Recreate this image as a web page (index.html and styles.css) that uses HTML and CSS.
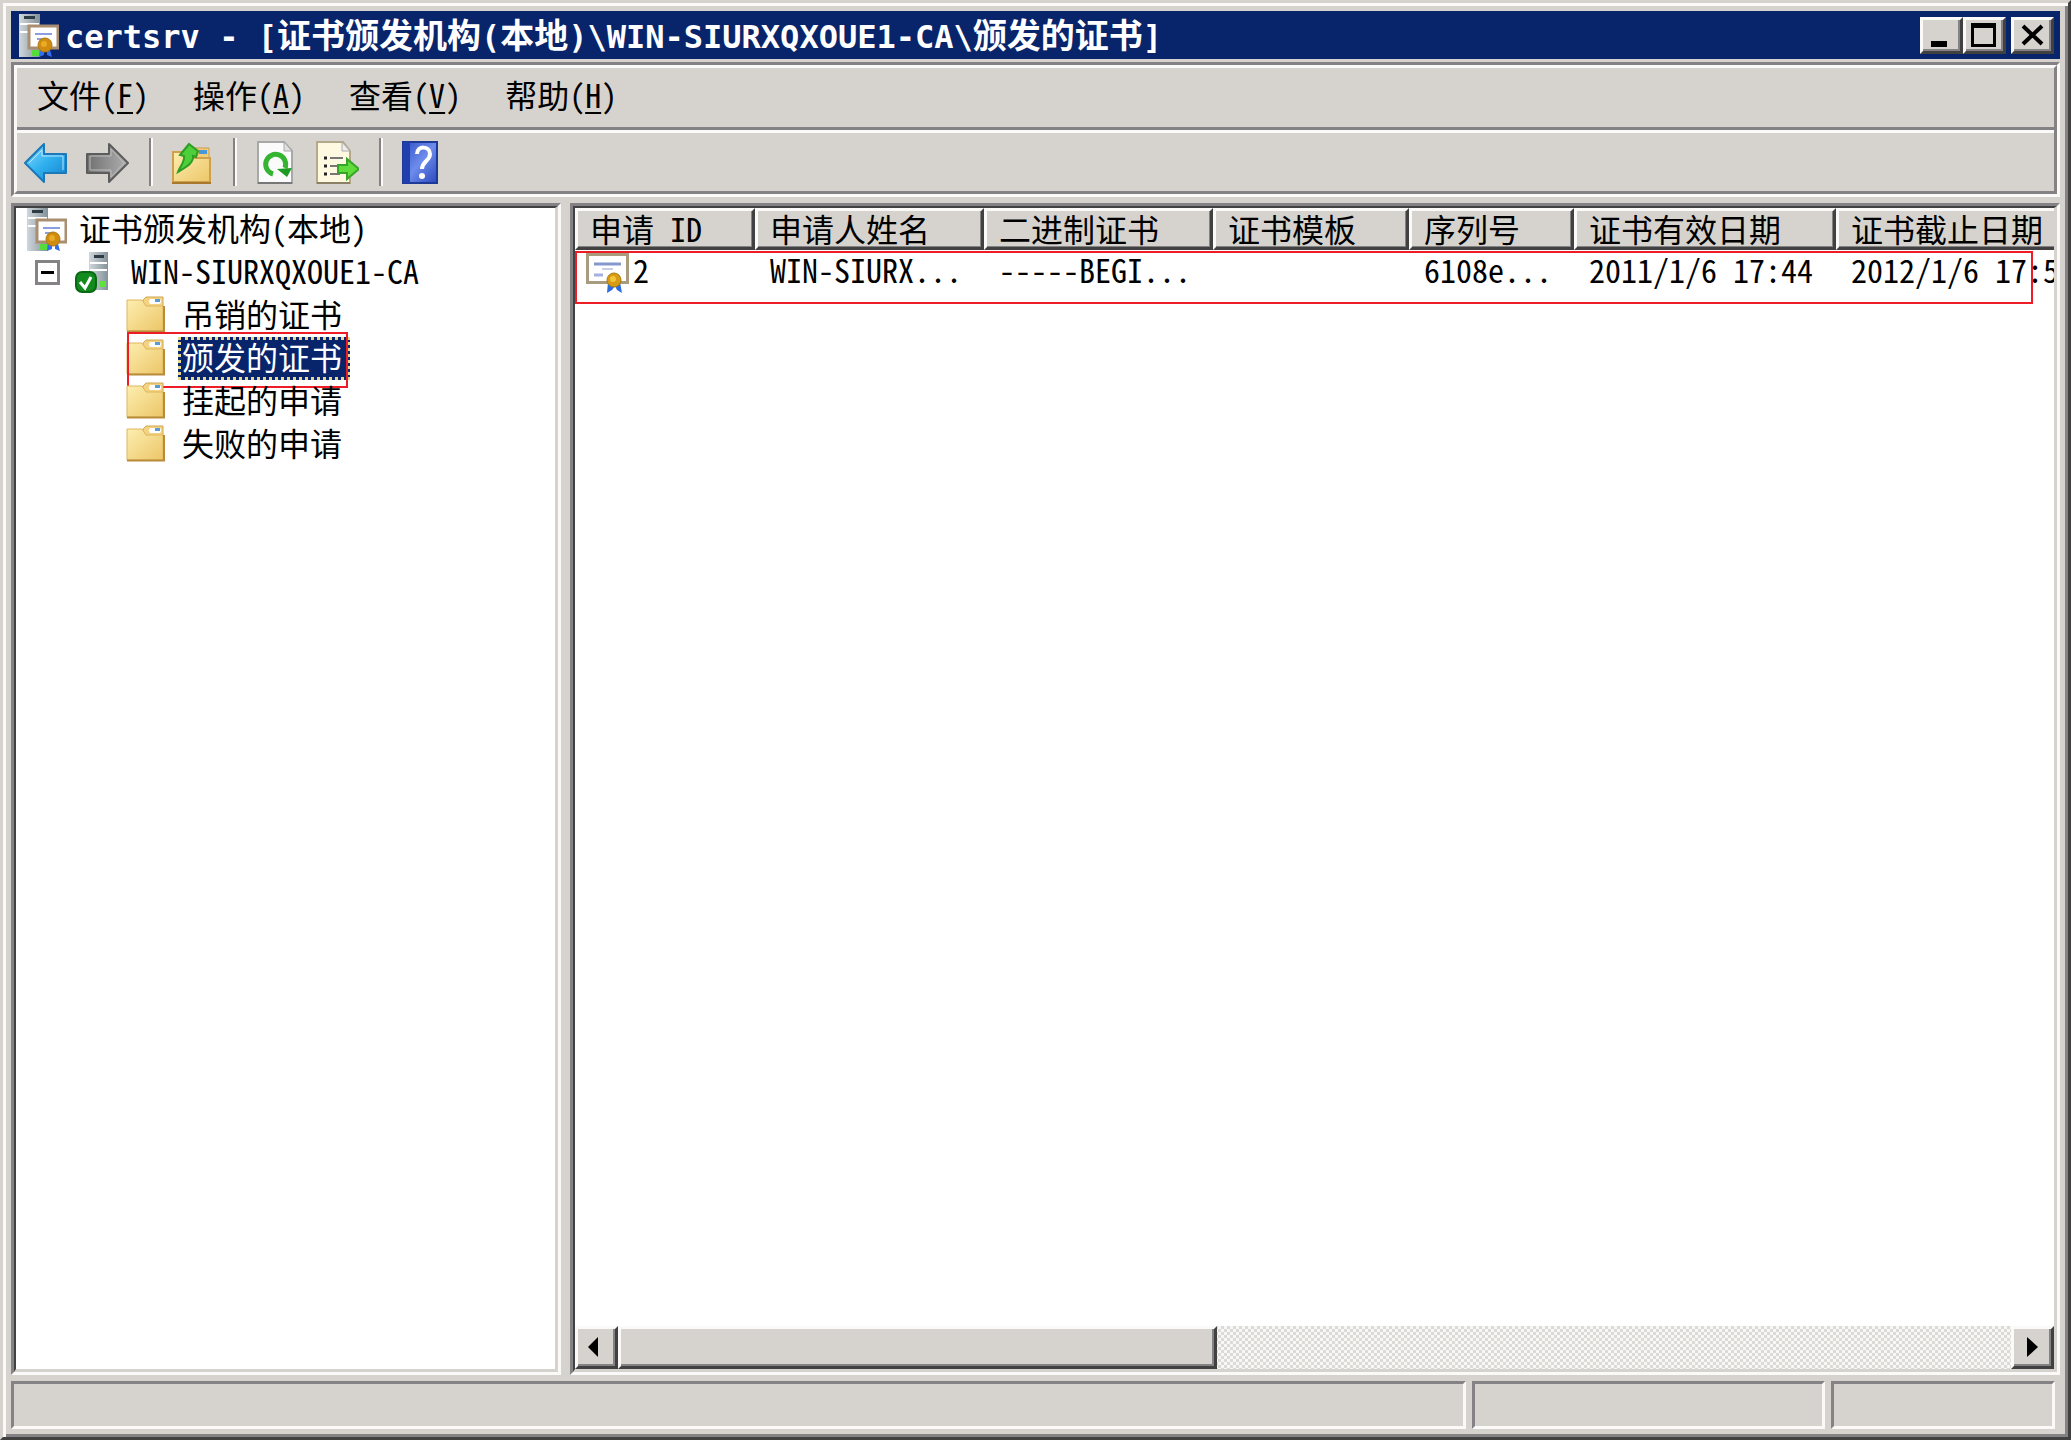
FILE: index.html
```html
<!DOCTYPE html>
<html lang="zh-CN">
<head>
<meta charset="utf-8">
<title>certsrv - [证书颁发机构(本地)\WIN-SIURXQXOUE1-CA\颁发的证书]</title>
<link rel="stylesheet" href="styles.css">
</head>
<body>
<svg class="defs" aria-hidden="true">
  <defs>
    <linearGradient id="g-folder" x1="0" y1="0" x2="1" y2="1"><stop offset="0" stop-color="#fdeeb0"/><stop offset="1" stop-color="#ecc668"/></linearGradient>
    <linearGradient id="g-blue" x1="0" y1="0" x2="1" y2="1"><stop offset="0" stop-color="#8fdcff"/><stop offset=".5" stop-color="#2fb0ee"/><stop offset="1" stop-color="#1580cc"/></linearGradient>
    <linearGradient id="g-gray" x1="0" y1="0" x2="1" y2="0"><stop offset="0" stop-color="#707070"/><stop offset="1" stop-color="#b0b0b0"/></linearGradient>
    <linearGradient id="g-server" x1="0" y1="0" x2="1" y2="0"><stop offset="0" stop-color="#cfd7db"/><stop offset="1" stop-color="#84919a"/></linearGradient>
    <linearGradient id="g-help" x1="0" y1="0" x2="1" y2="1"><stop offset="0" stop-color="#3050c4"/><stop offset=".5" stop-color="#6d8cec"/><stop offset="1" stop-color="#2a48bc"/></linearGradient>
    <symbol id="i-folder" viewBox="0 0 43 43">
      <path d="M17 9V6L20 3H37V14H17Z" fill="#f3d383" stroke="#d0a650"/>
      <rect x="23" y="5" width="12" height="5" rx="2" fill="#fff"/><rect x="29" y="5" width="5" height="3" fill="#5b9bd0"/>
      <path d="M1 6H16L20 12H37V37H1Z" fill="url(#g-folder)" stroke="#dfb65a"/>
      <path d="M1 37.500H38V12" fill="none" stroke="#b98c3c" stroke-width="2"/>
    </symbol>
    <symbol id="i-ca" viewBox="0 0 43 43">
      <rect x="3" y="0" width="21" height="43" fill="url(#g-server)"/>
      <rect x="8" y="2" width="11" height="3" fill="#2d3b44"/><path d="M4 10H23M4 18H12" stroke="#fff" stroke-width="2"/>
      <rect x="13" y="12" width="29" height="22" fill="#fff" stroke="#a98e70" stroke-width="3"/>
      <path d="M19 20H36M21 25H30" stroke="#8b9fe0" stroke-width="2"/>
      <rect x="16" y="36" width="8" height="6" fill="#55dc3a"/>
      <path d="M24 33L23 43L28 41V34M31 34V41L36 43L33 32" fill="#2f6ff0"/>
      <circle cx="29" cy="31" r="7" fill="#d08c10" stroke="#b0780e"/><circle cx="28" cy="30" r="3" fill="#e8ac28"/>
    </symbol>
    <symbol id="i-server-ok" viewBox="0 0 43 43">
      <rect x="18" y="1" width="19" height="38" fill="url(#g-server)"/>
      <rect x="23" y="4" width="10" height="3" fill="#2d3b44"/><path d="M19 12H36M19 19H36" stroke="#fff" stroke-width="2"/>
      <rect x="29" y="30" width="6" height="6" fill="#5fe23c"/>
      <rect x="5" y="21" width="20" height="20" rx="6" fill="#138a1e" stroke="#0a6a14" stroke-width="2"/>
      <path d="M9 31L14 37L20 26" fill="none" stroke="#fff" stroke-width="3"/>
    </symbol>
    <symbol id="i-cert" viewBox="0 0 43 43">
      <rect x="1.500" y="4.500" width="40" height="28" fill="#fff" stroke="#a99b7e" stroke-width="3"/>
      <path d="M8 14H35" stroke="#8497cf" stroke-width="3"/><path d="M16 19H27" stroke="#c9cfe2" stroke-width="2"/><path d="M8 25H17" stroke="#a3b1de" stroke-width="3"/>
      <path d="M22 32L21 43L26 40L29 36L31 40L36 43L34 32Z" fill="#2d6be0"/>
      <circle cx="28" cy="30" r="7" fill="#d89c14" stroke="#a97a10"/><circle cx="27" cy="29" r="3" fill="#f2c63c"/>
    </symbol>
  </defs>
</svg>

<div class="window">
  <header class="titlebar">
    <svg class="icon"><use href="#i-ca"/></svg>
    <h1 class="title"><span class="latin">certsrv - [</span>证书颁发机构<span class="latin">(</span>本地<span class="latin">)\WIN-SIURXQXOUE1-CA\</span>颁发的证书<span class="latin">]</span></h1>
    <div class="captions">
      <button class="caption raised" type="button" aria-label="最小化"><svg viewBox="0 0 37 31"><path d="M8 21H24V27H8Z"/></svg></button>
      <button class="caption raised" type="button" aria-label="最大化"><svg viewBox="0 0 37 31"><path d="M5 3H30V27H5ZM8 8V24H27V8Z" fill-rule="evenodd"/></svg></button>
      <button class="caption raised close" type="button" aria-label="关闭"><svg viewBox="0 0 37 31"><path d="M9 6L28 24M28 6L9 24" stroke="#000" stroke-width="4"/></svg></button>
    </div>
  </header>

  <div class="bars">
    <div class="bars-inner">
      <nav class="menubar">
        <button class="menu" type="button">文件(<u>F</u>)</button>
        <button class="menu" type="button">操作(<u>A</u>)</button>
        <button class="menu" type="button">查看(<u>V</u>)</button>
        <button class="menu" type="button">帮助(<u>H</u>)</button>
      </nav>
      <div class="toolbar">
        <button class="tool" type="button" aria-label="后退"><svg class="icon" viewBox="0 0 43 43"><path d="M1 22L20 3V13H42V32H20V41Z" fill="url(#g-blue)" stroke="#1c78b8" stroke-width="2" stroke-linejoin="round"/><path d="M5 22L18 9V15H39V29" fill="none" stroke="#b4e8ff"/></svg></button>
        <button class="tool" type="button" aria-label="前进"><svg class="icon" viewBox="0 0 43 43"><path d="M42 22L23 3V13H1V32H23V41Z" fill="url(#g-gray)" stroke="#5c5c5c" stroke-width="2" stroke-linejoin="round"/><path d="M38 22L25 8V15H4V29H25V36Z" fill="none" stroke="#bdbdbd"/></svg></button>
        <span class="divider"></span>
        <button class="tool" type="button" aria-label="上一级"><svg class="icon" viewBox="0 0 43 43"><path d="M22 17V7H39V20Z" fill="#f0cd78" stroke="#c99e48"/><rect x="29" y="9" width="8" height="4" fill="#4a97d8"/><path d="M3 11H14L20 17H40V41H3Z" fill="url(#g-folder)" stroke="#d0a04a" stroke-width="2"/><path d="M2 42H41" stroke="#a8782c" stroke-width="2"/><path d="M19 3L28 10L26 16L23 15C24 22 16 26 8 31C10 25 15 21 14 15L10 14Z" fill="#4dcf3a" stroke="#2d9c24" stroke-width="2"/></svg></button>
        <span class="divider"></span>
        <button class="tool" type="button" aria-label="刷新"><svg class="icon" viewBox="0 0 43 43"><path d="M4 1H30L38 10V42H4Z" fill="#fbfbfb" stroke="#a8a8a8" stroke-width="2"/><path d="M30 1V10H38Z" fill="#e0e0e0" stroke="#a8a8a8"/><path d="M4 42H38" stroke="#777" stroke-width="2"/><path d="M19 33A10 10 0 1 1 31 27" fill="none" stroke="#35b432" stroke-width="5"/><path d="M23 28L38 27L33 36Z" fill="#1c9a22"/></svg></button>
        <button class="tool" type="button" aria-label="导出列表"><svg class="icon" viewBox="0 0 43 43"><path d="M1 1H27L34 10V42H1Z" fill="#fff9e2" stroke="#b4a98a" stroke-width="2"/><path d="M26 1V10H34Z" fill="#eee" stroke="#a8a8a8"/><path d="M1 42H34" stroke="#8b8064" stroke-width="2"/><path d="M8 17H11M8 25H11M8 33H11" stroke="#222" stroke-width="3"/><path d="M14 17H27M14 25H22M14 33H24" stroke="#777" stroke-width="2"/><path d="M22 24H31V18L43 28L31 38V32H22Z" fill="#5fdc3c" stroke="#38a52a" stroke-width="2"/></svg></button>
        <span class="divider"></span>
        <button class="tool" type="button" aria-label="帮助"><svg class="icon" viewBox="0 0 43 43"><rect x="3" y="1" width="34" height="41" fill="url(#g-help)" stroke="#1e3a96" stroke-width="2"/><rect x="3" y="1" width="7" height="41" fill="#1f3fae"/><path d="M17 13C17 4 30 5 30 13C30 20 22 20 22 28" fill="none" stroke="#fff" stroke-width="4"/><circle cx="22" cy="35" r="3" fill="#fff"/></svg></button>
      </div>
    </div>
  </div>

  <main class="panes">
    <section class="pane tree-pane">
      <div class="pane-inner">
        <ul class="tree">
          <li class="node root"><svg class="icon"><use href="#i-ca"/></svg><span class="label">证书颁发机构(本地)</span></li>
          <li class="node server"><button class="expander" type="button" aria-label="折叠"></button><svg class="icon"><use href="#i-server-ok"/></svg><span class="label">WIN-SIURXQXOUE1-CA</span></li>
          <li class="node leaf"><svg class="icon"><use href="#i-folder"/></svg><span class="label">吊销的证书</span></li>
          <li class="node leaf"><svg class="icon"><use href="#i-folder"/></svg><span class="label selected">颁发的证书</span><span class="mark mark-node"></span></li>
          <li class="node leaf"><svg class="icon"><use href="#i-folder"/></svg><span class="label">挂起的申请</span></li>
          <li class="node leaf"><svg class="icon"><use href="#i-folder"/></svg><span class="label">失败的申请</span></li>
        </ul>
      </div>
    </section>

    <section class="pane list-pane">
      <div class="pane-inner">
        <div class="list">
          <table class="grid">
            <colgroup><col class="c-id"><col class="c-name"><col class="c-name"><col class="c-tpl"><col class="c-serial"><col class="c-date"><col class="c-date"></colgroup>
            <thead>
              <tr><th>申请 ID</th><th>申请人姓名</th><th>二进制证书</th><th>证书模板</th><th>序列号</th><th>证书有效日期</th><th>证书截止日期</th></tr>
            </thead>
            <tbody>
              <tr><td class="first"><span class="id"><svg class="icon"><use href="#i-cert"/></svg>2</span></td><td>WIN-SIURX...</td><td>-----BEGI...</td><td></td><td>6108e...</td><td>2011/1/6 17:44</td><td>2012/1/6 17:54</td></tr>
            </tbody>
          </table>
          <span class="mark mark-row"></span>
        </div>
        <div class="scrollbar">
          <button class="arrow raised" type="button" aria-label="向左滚动"><svg viewBox="0 0 37 37"><path d="M10 18L20 8V28Z"/></svg></button>
          <div class="track"><div class="thumb raised"></div></div>
          <button class="arrow raised" type="button" aria-label="向右滚动"><svg viewBox="0 0 37 37"><path d="M24 18L13 8V28Z"/></svg></button>
        </div>
      </div>
    </section>
  </main>

  <footer class="status">
    <div class="cell wide"></div>
    <div class="cell medium"></div>
    <div class="cell small"></div>
  </footer>
</div>
</body>
</html>
```
FILE: styles.css
```css
:root {
  --face: #d6d3ce;
  --light: #fbfaf8;
  --shadow: #848284;
  --dark: #424142;
  --navy: #08246b;
  --mark: #ee1c24;
}

* { box-sizing: border-box; }

body {
  margin: 0;
  background: var(--face);
  color: #000;
  font: 32px/39px "Noto Sans CJK SC", sans-serif;
  font-feature-settings: "hwid";
}

button {
  margin: 0;
  padding: 0;
  border: 0;
  background: none;
  color: inherit;
  font: inherit;
  font-feature-settings: inherit;
}

.defs { position: absolute; width: 0; height: 0; }

.icon { display: block; flex: none; width: 43px; height: 43px; }

.raised {
  border: 3px solid;
  border-color: var(--light) var(--dark) var(--dark) var(--light);
  background: var(--face);
  box-shadow: inset -2px -2px var(--shadow);
}

/* Window frame */
.window {
  display: flex;
  flex-direction: column;
  height: 100vh;
  padding: 8px;
  border: 3px solid;
  border-color: var(--face) var(--dark) var(--dark) var(--face);
  box-shadow: inset 3px 3px var(--light), inset -3px -3px var(--shadow);
}

.titlebar {
  display: flex;
  align-items: center;
  height: 48px;
  padding: 0 6px 0 5px;
  background: var(--navy);
  color: #fff;
}

.title {
  flex: 1;
  height: 48px;
  margin: 0 0 0 6px;
  font-size: 34px;
  font-weight: 700;
  line-height: 46px;
  white-space: pre;
}

.latin { font-family: "DejaVu Sans Mono", monospace; font-size: 32px; line-height: 1; }

.captions { display: flex; }
.caption { width: 43px; height: 37px; }
.caption svg { display: block; width: 37px; height: 31px; }
.close { margin-left: 5px; }

/* Menu and tool bars */
.bars {
  margin-top: 3px;
  border: 3px solid;
  border-color: var(--shadow) var(--light) var(--light) var(--shadow);
}

.bars-inner {
  border: 3px solid;
  border-color: var(--light) var(--shadow) var(--shadow) var(--light);
}

.menubar {
  display: flex;
  gap: 44px;
  height: 62px;
  padding: 7px 20px 0;
  border-bottom: 3px solid var(--shadow);
}

.menu { height: 39px; white-space: nowrap; }
.menu u { text-decoration-thickness: 2px; text-underline-offset: 4px; }

.toolbar {
  display: flex;
  align-items: center;
  gap: 2px;
  height: 61px;
  border-top: 3px solid var(--light);
}

.tool {
  display: flex;
  align-items: center;
  justify-content: center;
  width: 60px;
  height: 56px;
  padding-right: 4px;
}

.divider {
  width: 4px;
  height: 48px;
  margin: 0 8px;
  border-left: 2px solid var(--shadow);
  border-right: 2px solid var(--light);
}

/* Panes */
.panes { display: flex; flex: 1; gap: 9px; min-height: 0; margin: 6px 0; }

.pane {
  display: flex;
  min-width: 0;
  border: 3px solid;
  border-color: var(--shadow) var(--light) var(--light) var(--shadow);
}

.pane-inner {
  display: flex;
  flex: 1;
  flex-direction: column;
  min-width: 0;
  border: solid;
  border-width: 2px 3px 3px 2px;
  border-color: var(--dark) var(--face) var(--face) var(--dark);
  background: #fff;
}

.tree-pane { flex: 0 0 550px; }
.list-pane { flex: 1; }

.tree { margin: 0; padding: 0; list-style: none; }

.node { position: relative; display: flex; align-items: center; height: 43px; white-space: nowrap; }
.label { height: 43px; }
.root { padding-left: 8px; }
.root .label { padding-left: 12px; }
.server { padding-left: 19px; }
.server .icon { margin-left: 11px; }
.server .label { padding-left: 17px; }
.leaf { padding-left: 110px; }
.leaf .label { margin-left: 9px; padding: 0 8px 0 4px; }

.expander {
  width: 25px;
  height: 25px;
  border: 3px solid var(--shadow);
  background: linear-gradient(#000, #000) center / 13px 3px no-repeat #fff;
}

.selected {
  background: var(--navy);
  color: #fff;
  outline: 3px dotted #e8d890;
  outline-offset: -3px;
}

.mark { position: absolute; border: 2px solid var(--mark); pointer-events: none; }
.mark-node { left: 111px; top: -5px; width: 221px; height: 56px; }
.mark-row { left: 0; right: 21px; top: 43px; height: 53px; }

.list { position: relative; flex: 1; min-height: 0; overflow-x: clip; }

.grid { width: 1522px; table-layout: fixed; border-collapse: separate; border-spacing: 0; }
.c-id { width: 180px; }
.c-name { width: 229px; }
.c-tpl { width: 196px; }
.c-serial { width: 165px; }
.c-date { width: 262px; }

.grid th {
  height: 42px;
  padding: 0 0 0 12px;
  border: 3px solid;
  border-color: var(--light) var(--dark) var(--dark) var(--light);
  background: var(--face);
  box-shadow: inset -1px -1px var(--shadow);
  font-weight: 400;
  line-height: 34px;
  text-align: left;
  vertical-align: top;
  white-space: nowrap;
}

.grid td { height: 43px; padding: 0 0 0 15px; vertical-align: top; white-space: nowrap; }
.grid .first { padding-left: 11px; }
.id { display: flex; gap: 4px; }

/* Horizontal scroll bar */
.scrollbar { display: flex; height: 43px; }
.arrow { flex: none; width: 43px; height: 43px; }
.arrow svg { display: block; width: 37px; height: 37px; }
.track { flex: 1; background: repeating-conic-gradient(#dcdad6 0 25%, #f8f7f5 0 50%) 0 0 / 6px 6px; }
.thumb { width: 43%; height: 43px; }

/* Status bar */
.status { display: flex; gap: 6px; height: 48px; padding-right: 5px; }
.cell {
  border: 3px solid;
  border-color: var(--shadow) var(--light) var(--light) var(--shadow);
}
.wide { flex: 1; }
.medium { width: 353px; }
.small { width: 224px; }
```
